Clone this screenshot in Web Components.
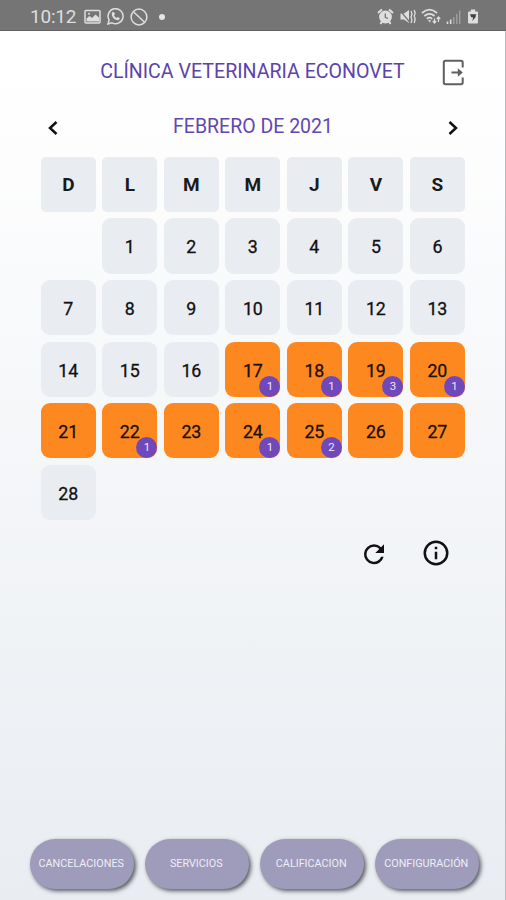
<!DOCTYPE html>
<html lang="es">
<head>
<meta charset="utf-8">
<title>Clínica Veterinaria Econovet</title>
<style>
html,body{margin:0;padding:0;height:900px;overflow:hidden;font-family:Roboto,"Liberation Sans",sans-serif}
</style>
</head>
<body>
<clinic-app></clinic-app>
<script>
const define = (name, html, setup) => {
  const t = document.createElement('template');
  t.innerHTML = html;
  customElements.define(name, class extends HTMLElement {
    connectedCallback() {
      if (this.shadowRoot) return;
      const root = this.attachShadow({ mode: 'open' });
      root.append(t.content.cloneNode(true));
      if (setup) setup(this, root);
    }
  });
};

define('status-bar', `
<style>
:host{display:flex;box-sizing:border-box;height:31px;flex:none;background:#757575;border-bottom:1px solid #616161;color:#dedede;align-items:center;padding:3px 26px 0 30px}
.time{font-size:19px;line-height:26px;width:46px;margin-right:8px;white-space:nowrap;letter-spacing:-.2px}
.sp{flex:1}
svg{display:block;flex:none}
.l{display:flex;align-items:center;gap:6px}
.r{display:flex;align-items:center;gap:5px}
.dot{width:6px;height:6px;border-radius:50%;background:#e4e4e4;margin-left:5px}
</style>
<div class="time">10:12</div>
<div class="l">
<svg width="17" height="16" viewBox="0 0 17 16"><rect x="1" y="1.5" width="15" height="12.6" rx="1" fill="none" stroke="#dedede" stroke-width="1.5"/><path d="M2.5 12.5V9.5L5.5 7L8 9L11.5 5.5L15 8.5V12.5Z" fill="#dedede"/><circle cx="5" cy="4.7" r="1" fill="#dedede"/></svg>
<svg width="17" height="17" viewBox="0 0 17 17"><path d="M1 16L2.1 12A7.5 7.5 0 1 1 5 14.8Z" fill="none" stroke="#dedede" stroke-width="1.5"/><path d="M5.6 4.1L7.2 4.2L7.9 6.3L7 7.4Q7.9 9.1 9.7 10L10.8 9.1L12.7 10Q12.6 12.2 10.8 12.3Q5.1 11.5 4.7 6.1Q4.7 4.7 5.6 4.1Z" fill="#dedede"/></svg>
<svg width="18" height="18" viewBox="0 0 18 18"><circle cx="9" cy="9" r="7.9" fill="none" stroke="#dedede" stroke-width="1.5"/><path d="M3.4 3.8L14.6 14.2" stroke="#dedede" stroke-width="1.5"/></svg>
<div class="dot"></div>
</div>
<div class="sp"></div>
<div class="r">
<svg width="17" height="17" viewBox="0 0 17 17"><circle cx="8.5" cy="9" r="6.4" fill="#dedede"/><path d="M1 5L5 1.5M16 5L12 1.5M3.5 15.8L5 13.5M13.5 15.8L12 13.5" stroke="#dedede" stroke-width="2.2"/><path d="M8.3 5.5V9.4L11 10.5" stroke="#757575" stroke-width="1.3" fill="none"/></svg>
<svg width="17" height="17" viewBox="0 0 17 17"><path d="M1.5 5.5H5L10 2V15L5 11.5H1.5Z" fill="#dedede"/><path d="M1 2.5L11 14.5" stroke="#757575" stroke-width="1.2"/><path d="M12 3L13 6L12 9L13 12L12 15M15.2 2L16.2 5L15.2 8L16.2 11L15.2 15" fill="none" stroke="#dedede" stroke-width="1.3"/></svg>
<svg width="20" height="17" viewBox="0 0 20 17"><path d="M1 5Q8.5 -1.8 16 5M3.4 8Q8.5 3.7 13.6 8M5.8 10.8Q8.5 8.6 11.2 10.8" fill="none" stroke="#dedede" stroke-width="1.7"/><path d="M7 12L9.8 12L9 14.8Z" fill="#dedede"/><path d="M13.5 15V10.5M11.8 13L13.5 15L15.2 13M17.5 9V14M15.8 11L17.5 9L19.2 11" fill="none" stroke="#dedede" stroke-width="1.2"/></svg>
<svg width="15" height="16" viewBox="0 0 15 16"><path d="M1.5 12.5V15M4.7 10.5V15" stroke="#dedede" stroke-width="1.6"/><path d="M7.8 8V15M10.8 5V15M13.7 1.5V15" stroke="#a3a3a3" stroke-width="1.3"/></svg>
<svg width="14" height="17" viewBox="0 0 14 17"><path d="M2 4.5Q2 3.5 3 3.5H4.8V1.5H9.2V3.5H11Q12 3.5 12 4.5V14.5Q12 15.5 11 15.5H3Q2 15.5 2 14.5Z" fill="#dedede"/><path d="M4 6.2H10.5L9.2 8.4L10.2 8.6L6.2 13L7.2 9.6L5.2 9.2Z" fill="#3f3f3f"/></svg>
</div>`);

define('app-header', `
<style>
:host{display:grid;grid-template-columns:1fr auto 1fr;align-items:center;height:30px;padding:25px 39px 0}
h1{grid-column:2;margin:0;font-weight:400;font-size:19.6px;line-height:24px;color:#5b43ac;white-space:nowrap}
svg{justify-self:end;display:block;margin-top:3px}
</style>
<h1><slot></slot></h1>
<svg width="24" height="28" viewBox="0 0 24 28"><path d="M20.7 8.5V3.5Q20.7 1.7 18.9 1.7H3.5Q1.8 1.7 1.8 3.5V23.5Q1.8 25.3 3.5 25.3H18.9Q20.7 25.3 20.7 23.5V18.5" fill="none" stroke="#5f5f5f" stroke-width="2"/><path d="M9.5 13.5H19" stroke="#5f5f5f" stroke-width="2"/><path d="M15.8 9.2L20.8 13.5L15.8 17.8Z" fill="#5f5f5f"/></svg>`);

define('month-nav', `
<style>
:host{display:flex;justify-content:space-between;align-items:center;height:24px;margin-top:28px;padding:0 46px 0 47px}
h2{margin:0;font-weight:400;font-size:19.5px;line-height:24px;color:#6247b2;white-space:nowrap;padding-top:2px}
svg{display:block;margin-top:4px}
</style>
<svg width="12" height="16" viewBox="0 0 12 16"><path d="M9.5 2L3 8L9.5 14" fill="none" stroke="#111" stroke-width="2.5"/></svg>
<h2><slot></slot></h2>
<svg width="12" height="16" viewBox="0 0 12 16"><path d="M2.5 2L9 8L2.5 14" fill="none" stroke="#111" stroke-width="2.5"/></svg>`);

define('day-cell', `
<style>
:host{display:flex;position:relative;align-items:center;justify-content:center;box-sizing:border-box;background:#e9ecf1;border-radius:9px;color:#111;font-size:17.8px;font-weight:400;-webkit-text-stroke:.3px currentColor;padding-top:2px;letter-spacing:-.1px}
:host([head]){font-weight:700;-webkit-text-stroke:0;font-size:19px;border-radius:5px;padding-top:0;color:#1a1a1a}
:host([open]){background:#fd8820;color:#1c1008}
:host([blank]){visibility:hidden}
.b{position:absolute;right:0;bottom:0;width:21px;height:21px;border-radius:50%;background:#6f48b9;color:#eee6fa;font-size:11.5px;-webkit-text-stroke:0;line-height:21px;text-align:center}
</style><slot></slot>`, (el, root) => {
  const n = el.getAttribute('count');
  if (n) {
    const b = document.createElement('span');
    b.className = 'b';
    b.textContent = n;
    root.append(b);
  }
});

define('month-grid', `
<style>
:host{display:grid;grid-template-columns:repeat(7,1fr);grid-auto-rows:55.2px;gap:6.4px;margin:18.8px 40.1px 0 40.7px}
</style>`, (el, root) => {
  const counts = { 17: 1, 18: 1, 19: 3, 20: 1, 22: 1, 24: 1, 25: 2 };
  const cell = (text, attrs = {}) => {
    const c = document.createElement('day-cell');
    for (const k in attrs) c.setAttribute(k, attrs[k]);
    c.textContent = text;
    root.append(c);
  };
  for (const d of 'DLMMJVS') cell(d, { head: '' });
  cell('', { blank: '' });
  for (let d = 1; d <= 28; d++) {
    const a = {};
    if (d >= 17 && d <= 27) a.open = '';
    if (counts[d]) a.count = counts[d];
    cell(d, a);
  }
});

define('tool-icons', `
<style>
:host{display:flex;justify-content:flex-end;align-items:center;gap:32px;margin-top:18px;padding-right:54px}
svg{display:block}
</style>
<svg width="30" height="30" viewBox="0 0 24 24"><path transform="translate(0 1)" d="M17.65 6.35A7.958 7.958 0 0 0 12 4a8 8 0 1 0 7.73 10h-2.08A6 6 0 1 1 12 6c1.66 0 3.14.69 4.22 1.78L13 11h7V4l-2.35 2.35z" fill="#111"/></svg>
<svg width="30" height="30" viewBox="0 0 24 24"><path d="M11 7h2v2h-2zm0 4h2v6h-2zm1-9a10 10 0 1 0 0 20 10 10 0 0 0 0-20zm0 18a8 8 0 1 1 0-16 8 8 0 0 1 0 16z" fill="#111"/></svg>`);

define('pill-button', `
<style>
:host{display:flex;align-items:center;justify-content:center;box-sizing:border-box;height:50px;width:104.5px;padding:0 1px 1px 0;border-radius:25px;background:#9f9bba;color:#eeeef8;font-size:10.8px;white-space:nowrap;box-shadow:2px 2px 4px rgba(50,50,60,.8)}
</style><slot></slot>`);

define('clinic-app', `
<style>
:host{display:flex;flex-direction:column;width:506px;height:900px;box-sizing:border-box}
main{flex:1;display:flex;flex-direction:column;box-sizing:border-box;border-right:1px solid #b9bbbf;background:linear-gradient(#fff 0,#fefefe 10%,#f3f5f8 55%,#e9edf1 100%)}
nav{display:flex;gap:10.5px;margin:auto 0 11px 29.5px}
</style>
<status-bar></status-bar>
<main>
<app-header>CLÍNICA VETERINARIA ECONOVET</app-header>
<month-nav>FEBRERO DE 2021</month-nav>
<month-grid></month-grid>
<tool-icons></tool-icons>
<nav><pill-button>CANCELACIONES</pill-button><pill-button>SERVICIOS</pill-button><pill-button>CALIFICACION</pill-button><pill-button>CONFIGURACIÓN</pill-button></nav>
</main>`);
</script>
</body>
</html>
